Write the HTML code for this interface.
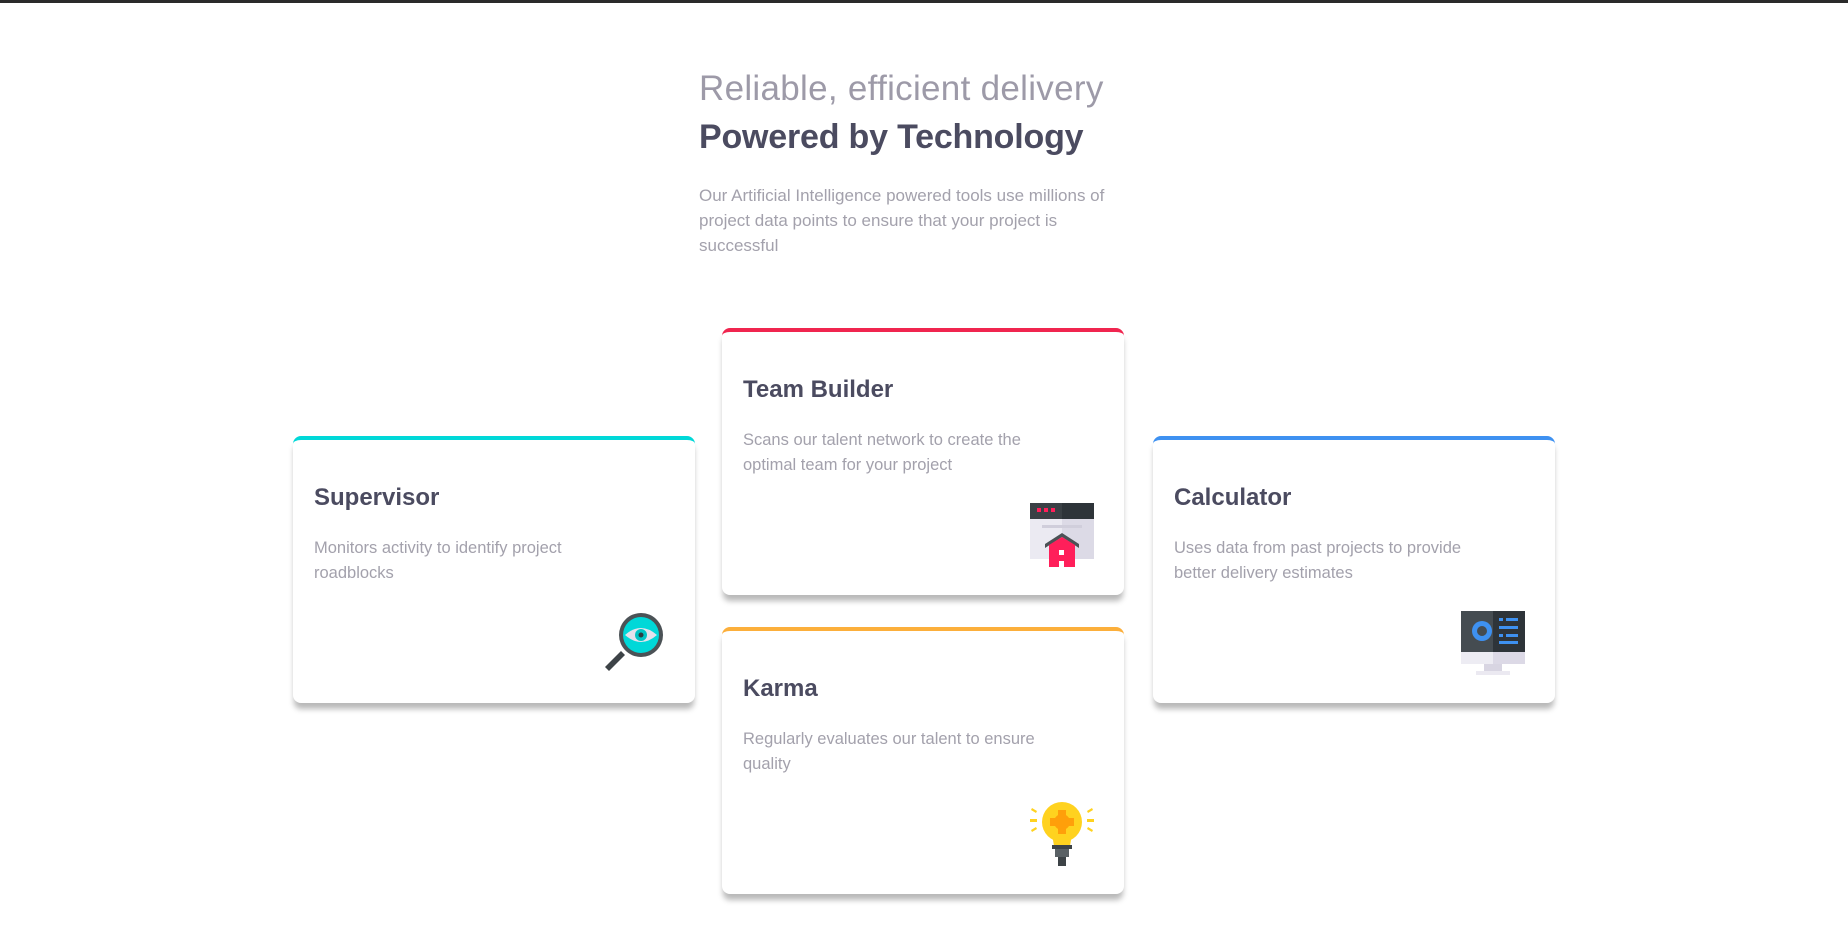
<!DOCTYPE html>
<html><head><meta charset="utf-8"><style>
body{margin:0;width:1848px;height:951px;background:#fff;font-family:"Liberation Sans",sans-serif;position:relative;overflow:hidden;border-top:3px solid #2a2a2a;box-sizing:border-box}
.h1{position:absolute;left:699px;top:66px;font-size:35px;color:#9d9aa8;font-weight:300;letter-spacing:0.3px}
.h2{position:absolute;left:699px;top:115px;font-size:34px;color:#4b4b60;font-weight:bold;letter-spacing:-0.2px}
.p{position:absolute;left:699px;top:180px;width:470px;font-size:17px;line-height:25px;color:#a3a1ac}
.card{position:absolute;width:402px;height:267px;background:#fff;border-radius:8px;border-top:4px solid;box-sizing:border-box;box-shadow:0 7px 6px -1px rgba(0,0,0,0.28)}
.card h3{position:absolute;left:21px;top:44px;margin:0;font-size:24px;color:#4b4b60;font-weight:bold}
.card p{position:absolute;left:21px;top:96px;margin:0;width:330px;font-size:16.5px;line-height:25px;color:#a3a1ac}
.card svg{position:absolute;right:30px;bottom:28px;width:64px;height:64px}
</style></head><body>
<div class="h1">Reliable, efficient delivery</div>
<div class="h2">Powered by Technology</div>
<div class="p">Our Artificial Intelligence powered tools use millions of<br>project data points to ensure that your project is<br>successful</div>

<div class="card" style="left:293px;top:433px;border-color:#00d8d8">
<h3>Supervisor</h3><p>Monitors activity to identify project roadblocks</p>
<svg viewBox="0 0 64 64"><path d="M20 40 L4 56 L8 60 L24 44Z" fill="#3d4347"/><circle cx="40" cy="24" r="22" fill="#4b5256"/><circle cx="40" cy="24" r="18" fill="#00d8d8"/><path d="M24 24 Q40 10 56 24 Q40 38 24 24Z" fill="#e4e2ec"/><circle cx="40" cy="24" r="6" fill="#00c4c4"/><circle cx="40" cy="24" r="2.5" fill="#2f3b40"/></svg></div>

<div class="card" style="left:722px;top:325px;border-color:#f0254f">
<h3>Team Builder</h3><p>Scans our talent network to create the optimal team for your project</p>
<svg viewBox="0 0 64 64"><rect x="0" y="0" width="64" height="16" fill="#3a4045"/><rect x="32" y="0" width="32" height="16" fill="#2e3439"/><rect x="0" y="16" width="32" height="40" fill="#ebeaf2"/><rect x="32" y="16" width="32" height="40" fill="#dcdae6"/><rect x="12" y="22" width="40" height="3" fill="#d0cedb"/><rect x="7" y="5" width="4" height="4" fill="#ff1f5a"/><rect x="14" y="5" width="4" height="4" fill="#ff1f5a"/><rect x="21" y="5" width="4" height="4" fill="#ff1f5a"/><path d="M15 41 L32 30 L49 41 L49 45 L32 34 L15 45Z" fill="#4b5256"/><path d="M19 42 L32 34 L45 42 L45 64 L19 64Z" fill="#ff1f5a"/><rect x="29" y="47" width="5" height="5" fill="#fff"/><rect x="29" y="58" width="5" height="6" fill="#fff"/></svg></div>

<div class="card" style="left:722px;top:624px;border-color:#fcaf3b">
<h3>Karma</h3><p>Regularly evaluates our talent to ensure quality</p>
<svg viewBox="0 0 64 64"><circle cx="32" cy="20" r="20" fill="#ffd21f"/><path d="M22 32 L42 32 L40 44 L24 44Z" fill="#ffd21f"/><circle cx="32" cy="20" r="8" fill="#ff9f0a"/><rect x="28" y="8" width="8" height="24" fill="#ff9f0a"/><rect x="20" y="16" width="24" height="8" fill="#ff9f0a"/><rect x="22" y="43" width="20" height="4" fill="#3d4347"/><rect x="25" y="47" width="14" height="8" fill="#5a6165"/><rect x="28" y="55" width="8" height="9" fill="#3d4347"/><rect x="0" y="17" width="7" height="3" fill="#ffd21f"/><rect x="57" y="17" width="7" height="3" fill="#ffd21f"/><path d="M2 6 L7 9 L6 11 L1 8Z M62 6 L57 9 L58 11 L63 8Z M2 30 L7 27 L6 25 L1 28Z M62 30 L57 27 L58 25 L63 28Z" fill="#ffd21f"/></svg></div>

<div class="card" style="left:1153px;top:433px;border-color:#3e91f1">
<h3>Calculator</h3><p>Uses data from past projects to provide better delivery estimates</p>
<svg viewBox="0 0 64 64"><rect x="0" y="0" width="32" height="41" fill="#454c51"/><rect x="32" y="0" width="32" height="41" fill="#2e3439"/><rect x="0" y="41" width="32" height="12" fill="#edecf3"/><rect x="32" y="41" width="32" height="12" fill="#dcd9e6"/><rect x="23" y="53" width="18" height="7" fill="#d8d5e2"/><rect x="15" y="60" width="34" height="4" fill="#ebe9f1"/><circle cx="21" cy="20" r="10" fill="#3e91f1"/><circle cx="21" cy="20" r="5" fill="#454c51"/><rect x="38" y="7" width="4" height="3" fill="#3e91f1"/><rect x="45" y="7" width="12" height="3" fill="#3e91f1"/><rect x="38" y="15" width="19" height="3" fill="#3e91f1"/><rect x="38" y="23" width="4" height="3" fill="#3e91f1"/><rect x="45" y="23" width="12" height="3" fill="#3e91f1"/><rect x="38" y="30" width="19" height="3" fill="#3e91f1"/></svg></div>
</body></html>
